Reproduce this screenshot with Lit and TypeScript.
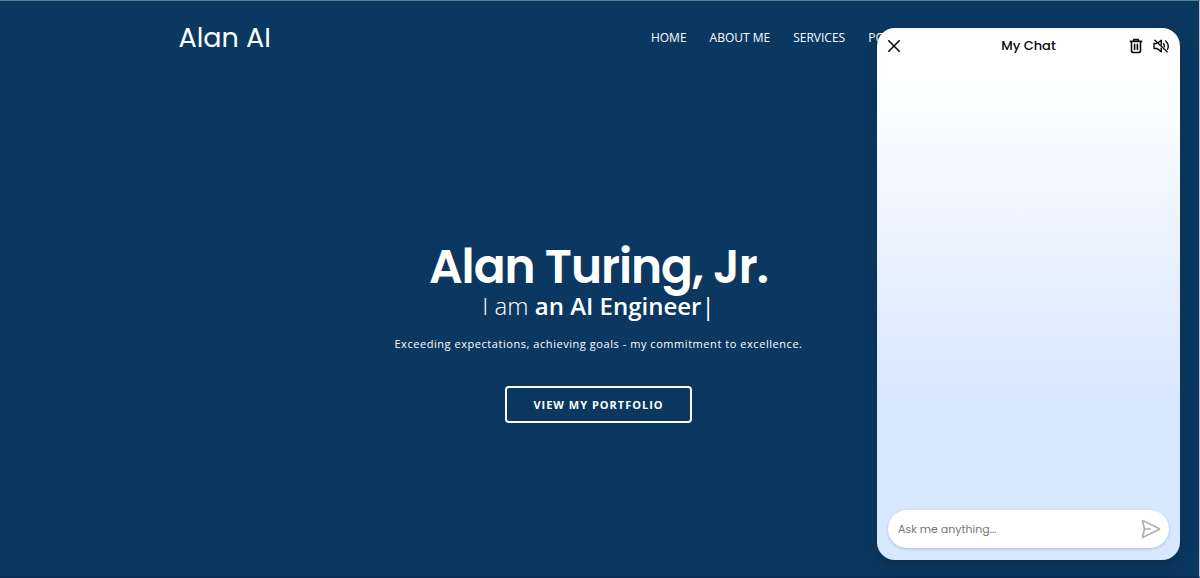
import { LitElement, html, css } from "lit";
import { customElement, state } from "lit/decorators.js";

@customElement("chat-panel")
class ChatPanel extends LitElement {
  @state() private draft = "";

  static styles = css`
    :host {
      display: flex;
      flex-direction: column;
      box-sizing: border-box;
      border-radius: 18px;
      padding: 4px 11px 12px;
      background: linear-gradient(180deg, #fff 0%, #fff 8%, #d8e8ff 70%, #d8e8ff 100%);
      box-shadow: 0 5px 14px rgba(0, 0, 0, 0.2);
      font-family: "Poppins", "Inter", sans-serif;
      color: #0a0a0a;
    }
    .bar {
      display: grid;
      grid-template-columns: 1fr auto 1fr;
      align-items: center;
      height: 28px;
    }
    .title {
      margin: 0;
      font-size: 13px;
      line-height: 22px;
      font-weight: 500;
    }
    .actions {
      display: flex;
      justify-content: flex-end;
      gap: 9px;
    }
    button {
      display: flex;
      padding: 0;
      border: 0;
      background: none;
      color: inherit;
      cursor: pointer;
    }
    .log {
      flex: 1;
    }
    .composer {
      display: flex;
      align-items: center;
      height: 38px;
      padding: 0 8px 0 10px;
      border-radius: 19px;
      background: #fff;
      box-shadow: 0 1px 3px rgba(60, 90, 150, 0.3);
    }
    .field {
      flex: 1;
      min-width: 0;
      border: 0;
      padding: 0;
      outline: none;
      background: none;
      font: 400 11px/20px "Poppins", "Inter", sans-serif;
      color: #222;
    }
    .field::placeholder {
      color: #757575;
      opacity: 1;
    }
    .send {
      color: #b0b0b0;
    }
  `;

  render() {
    return html`
      <header class="bar">
        <div>
          <button aria-label="Close chat">
            <svg width="12" height="12" viewBox="0 0 12 12" fill="none" stroke="currentColor" stroke-width="1.6" stroke-linecap="round">
              <path d="M.8 .8 11.2 11.2M11.2 .8 .8 11.2" />
            </svg>
          </button>
        </div>
        <h2 class="title">My Chat</h2>
        <div class="actions">
          <button aria-label="Clear chat">
            <svg width="16" height="16" viewBox="0 0 16 16" fill="none" stroke="currentColor" stroke-width="1.6" stroke-linecap="round" stroke-linejoin="round">
              <path d="M2.3 3.4H13.7M5.8 3.2V1.5H10.2V3.2M3.5 3.6V12.4Q3.5 14.5 5.6 14.5H10.4Q12.5 14.5 12.5 12.4V3.6M6.6 6.4V11.4M9.4 6.4V11.4" />
            </svg>
          </button>
          <button aria-label="Unmute voice">
            <svg width="16" height="16" viewBox="0 0 17 16" fill="none" stroke="currentColor" stroke-width="1.5" stroke-linecap="round" stroke-linejoin="round">
              <path d="M2 1.8 15 14.2" />
              <path d="M3.6 5.3H1.1V10.6H4L8.8 14V10.3" />
              <path d="M5.8 4.1 8.8 2V6.8" />
              <path d="M11.2 5.4Q12.4 7 11.9 8.8M13.4 2.6Q17.8 6.6 15.4 11.5" />
            </svg>
          </button>
        </div>
      </header>
      <div class="log" role="log"></div>
      <form class="composer" @submit=${(e: Event) => e.preventDefault()}>
        <input
          class="field"
          aria-label="Message"
          placeholder="Ask me anything..."
          .value=${this.draft}
          @input=${(e: Event) => (this.draft = (e.target as HTMLInputElement).value)}
        />
        <button class="send" aria-label="Send">
          <svg width="20" height="20" viewBox="0 0 20 20" fill="none" stroke="currentColor" stroke-width="1.7" stroke-linecap="round" stroke-linejoin="round">
            <path d="M2.2 1.7Q1.4 1.3 1.6 2.2L3.3 9.2Q3.5 10 3.3 10.8L1.6 17.8Q1.4 18.7 2.2 18.3L18 10.6Q19 10 18 9.4ZM3.6 10H9.2" />
          </svg>
        </button>
      </form>
    `;
  }
}

@customElement("app-root")
class AppRoot extends LitElement {
  private links = ["Home", "About me", "Services", "Portfolio", "Contact"];

  static styles = css`
    :host {
      display: block;
      font-family: "Open Sans", sans-serif;
      color: #fff;
    }
    .page {
      position: relative;
      display: flex;
      flex-direction: column;
      box-sizing: border-box;
      min-height: 100vh;
      border: solid #0b2f52;
      border-width: 1px 1px 2px 0;
      border-top-color: #5f7f95;
      border-right-color: #b5c6dc;
      background: #0b3861;
    }
    .top {
      display: flex;
      align-items: center;
      justify-content: space-between;
      box-sizing: border-box;
      width: 100%;
      max-width: 842px;
      height: 74px;
      margin: 0 auto;
    }
    .logo {
      font-family: "Poppins", "Inter", sans-serif;
      font-size: 27px;
      line-height: 36px;
      color: inherit;
      text-decoration: none;
    }
    .nav {
      display: flex;
      gap: 23px;
      padding-right: 10px;
    }
    .nav a {
      color: inherit;
      font-size: 12px;
      line-height: 20px;
      text-transform: uppercase;
      text-decoration: none;
    }
    .hero {
      flex: 1;
      display: flex;
      flex-direction: column;
      align-items: center;
      justify-content: center;
      padding: 14px 2px 0 0;
      text-align: center;
    }
    .name {
      margin: 0;
      font-family: "Poppins", "Inter", sans-serif;
      font-size: 47px;
      line-height: 50px;
      font-weight: 600;
      letter-spacing: -1px;
    }
    .role {
      margin: 0;
      font-size: 24px;
      line-height: 28px;
      font-weight: 300;
    }
    .role strong {
      font-weight: 600;
    }
    .caret {
      font-weight: 400;
    }
    .motto {
      margin: 14px 0 32px;
      font-size: 11px;
      line-height: 20px;
      letter-spacing: 0.05em;
    }
    .cta {
      padding: 0 26px;
      border: 2px solid #fff;
      border-radius: 4px;
      color: inherit;
      font-size: 11px;
      line-height: 33px;
      font-weight: 700;
      letter-spacing: 1px;
      text-transform: uppercase;
      text-decoration: none;
    }
    chat-panel {
      position: absolute;
      top: 27px;
      right: 19px;
      bottom: 16px;
      width: 303px;
    }
  `;

  render() {
    return html`
      <div class="page">
        <header class="top">
          <a class="logo" href="#home">Alan AI</a>
          <nav class="nav">
            ${this.links.map((l) => html`<a href="#${l.toLowerCase().replace(" ", "-")}">${l}</a>`)}
          </nav>
        </header>
        <main class="hero">
          <h1 class="name">Alan Turing, Jr.</h1>
          <p class="role">I am <strong>an AI Engineer</strong><span class="caret">|</span></p>
          <p class="motto">Exceeding expectations, achieving goals - my commitment to excellence.</p>
          <a class="cta" href="#portfolio">View my portfolio</a>
        </main>
        <chat-panel></chat-panel>
      </div>
    `;
  }
}
